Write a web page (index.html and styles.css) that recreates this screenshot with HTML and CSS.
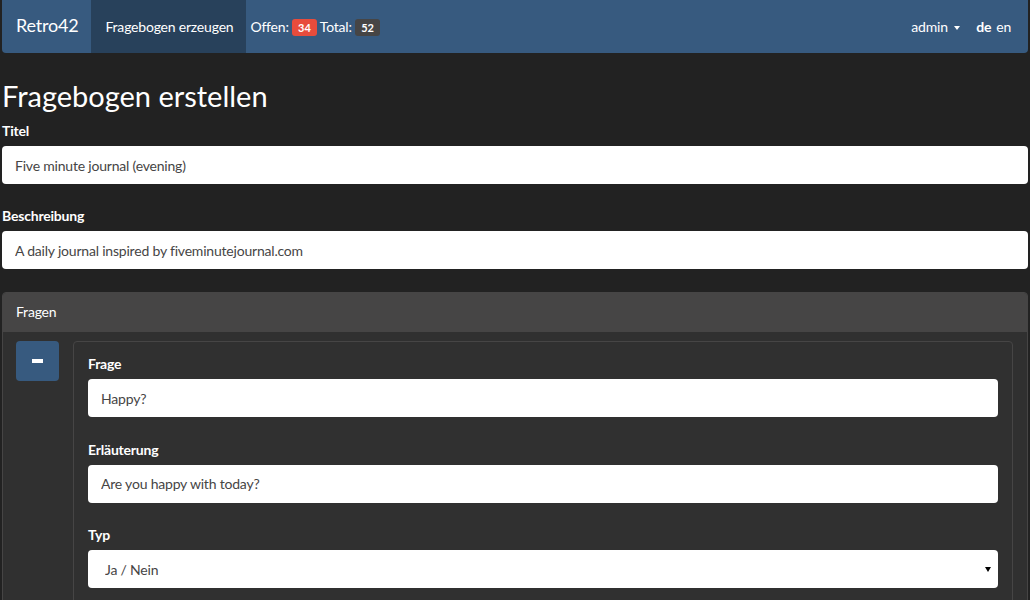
FILE: index.html
```html
<!DOCTYPE html>
<html lang="de">
<head>
<meta charset="utf-8">
<title>Fragebogen erstellen</title>
<link rel="stylesheet" href="styles.css">
</head>
<body>
<div class="page">
  <nav class="navbar">
    <a class="brand" href="#">Retro42</a>
    <a class="nav-link active" href="#">Fragebogen erzeugen</a>
    <p class="navbar-text">Offen: <span class="label label-danger">34</span> Total: <span class="label label-default">52</span></p>
    <div class="nav-right">
      <a class="dropdown" href="#">admin <span class="caret"></span></a>
      <a class="lang lang-active" href="#">de</a>
      <a class="lang" href="#">en</a>
    </div>
  </nav>

  <h1 class="title">Fragebogen erstellen</h1>

  <div class="form-group">
    <label class="control-label">Titel</label>
    <input class="form-control" type="text" value="Five minute journal (evening)">
  </div>
  <div class="form-group">
    <label class="control-label">Beschreibung</label>
    <input class="form-control" type="text" value="A daily journal inspired by fiveminutejournal.com">
  </div>

  <div class="panel">
    <div class="panel-heading">Fragen</div>
    <div class="panel-body">
      <button class="btn-remove" type="button" aria-label="Entfernen">
        <svg width="11" height="4" viewBox="0 0 11 4"><rect width="11" height="4" fill="#fff"/></svg>
      </button>
      <div class="question">
        <div class="form-group">
          <label class="control-label">Frage</label>
          <input class="form-control" type="text" value="Happy?">
        </div>
        <div class="form-group">
          <label class="control-label">Erläuterung</label>
          <input class="form-control" type="text" value="Are you happy with today?">
        </div>
        <div class="form-group">
          <label class="control-label">Typ</label>
          <div class="select-wrap">
            <select class="form-control select">
              <option>Ja / Nein</option>
            </select>
          </div>
        </div>
      </div>
    </div>
  </div>
</div>
</body>
</html>
```

FILE: styles.css
```css
* { box-sizing: border-box; }

html, body {
  margin: 0;
  background: #222222;
  color: #ffffff;
  font-family: Lato, "Open Sans", "Liberation Sans", sans-serif;
  font-size: 14px;
  letter-spacing: -0.2px;
  line-height: 21px;
}

.page {
  padding: 0 2px;
}

a { color: #ffffff; text-decoration: none; }

/* navbar */
.navbar {
  display: flex;
  align-items: baseline;
  height: 53px;
  background: #375a7f;
  border-radius: 0 0 4px 4px;
  overflow: hidden;
}

.brand {
  font-size: 18px;
  padding: 0 13px 0 14px;
}

.nav-link {
  padding: 16px 13px 16px 14px;
}

.nav-link.active {
  background: #28415b;
}

.navbar-text {
  margin: 0 0 0 4px;
}

.label {
  display: inline-block;
  font-size: 11px;
  font-weight: 700;
  letter-spacing: 0;
  line-height: 1;
  padding: 3px 6px 3px;
  border-radius: 3px;
  color: #fff;
  vertical-align: baseline;
}

.label-danger { background: #e74c3c; }
.label-default { background: #464545; }

.nav-right {
  margin-left: auto;
  display: flex;
  align-items: baseline;
  padding-right: 17px;
}

.dropdown {
  margin-right: 16px;
}

.caret {
  display: inline-block;
  width: 0;
  height: 0;
  margin-left: 3px;
  vertical-align: middle;
  border-top: 4px solid #fff;
  border-left: 3px solid transparent;
  border-right: 3px solid transparent;
}

.lang { margin-left: 5px; }
.lang-active { font-weight: 700; margin-left: 0; }

/* heading */
.title {
  font-size: 29px;
  font-weight: 400;
  letter-spacing: 0;
  line-height: 33px;
  margin: 26px 0 8px;
}

/* forms */
.form-group {
  margin-bottom: 21px;
}

.control-label {
  display: block;
  font-weight: 700;
  margin-bottom: 5px;
}

.form-control {
  display: block;
  width: 100%;
  height: 38px;
  padding: 0 13px;
  border: 0;
  border-radius: 4px;
  background: #ffffff;
  color: #464545;
  font-family: inherit;
  font-size: 14px;
  letter-spacing: -0.2px;
}

.select-wrap {
  position: relative;
}

.select {
  appearance: none;
  -webkit-appearance: none;
  padding-left: 17px;
}

.select-wrap::after {
  content: "";
  position: absolute;
  right: 7px;
  top: 17px;
  border-top: 5px solid #000;
  border-left: 3px solid transparent;
  border-right: 3px solid transparent;
}

/* panel */
.panel {
  border: 1px solid #464545;
  border-radius: 4px;
  background: #303030;
  margin-top: 23px;
}

.panel-heading {
  background: #464545;
  padding: 8px 13px 10px;
  border-radius: 3px 3px 0 0;
}

.panel-body {
  display: flex;
  align-items: flex-start;
  gap: 14px;
  padding: 9px 14px 9px 13px;
}

.btn-remove {
  flex: 0 0 43px;
  height: 40px;
  border: 0;
  border-radius: 4px;
  background: #375a7f;
  display: flex;
  align-items: center;
  justify-content: center;
  padding: 0;
}

.question {
  flex: 1;
  border: 1px solid #464545;
  border-radius: 4px;
  padding: 11px 14px 0;
}

.question .form-group {
  margin-bottom: 21.5px;
}
```
